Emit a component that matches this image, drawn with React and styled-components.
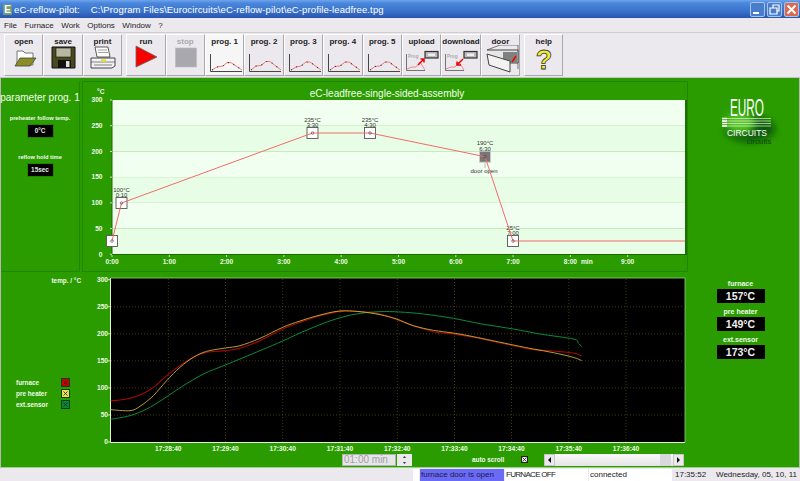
import React from "react";
import styled, { createGlobalStyle } from "styled-components";

const GREEN = "#2a9c00";
const GROOVE = "#1f8600";
const PALE = "#f0faea";

const Global = createGlobalStyle`
  html, body { margin: 0; padding: 0; background: #ece9ee; }
  body { font-family: "Liberation Sans", Arial, sans-serif; }
`;

const Window = styled.div`
  width: 800px;
  height: 481px;
  overflow: hidden;
  display: flex;
  flex-direction: column;
  background: #ece9ee;
`;

const TitleBar = styled.div`
  height: 18px;
  display: flex;
  align-items: center;
  padding: 0 1px 0 3px;
  background: linear-gradient(#6ea4ec 0%, #4a86dc 18%, #3a74cc 60%, #2a54b0 100%);
  color: #fff;
  font-size: 9.5px;
  letter-spacing: 0.12px;
  white-space: pre;
`;

const AppIcon = styled.span`
  width: 9px;
  height: 11px;
  margin-right: 2px;
  background: #6f9a78;
  color: #fff;
  font-size: 10px;
  font-weight: bold;
  line-height: 11px;
  text-align: center;
  letter-spacing: 0;
`;

const WinButtons = styled.div`
  margin-left: auto;
  display: flex;
  gap: 2px;
`;

const WinButton = styled.div`
  width: 15px;
  height: 15px;
  border-radius: 2px;
  border: 1px solid #a8c4ee;
  box-sizing: border-box;
  background: ${p => (p.$close ? "#dc6a50" : "#4a7ccc")};
  svg { display: block; }
`;

const MenuBar = styled.div`
  height: 15px;
  display: flex;
  align-items: center;
  gap: 7.5px;
  padding-left: 4px;
  font-size: 8px;
  color: #222;
  border-bottom: 1px solid #cfcdd0;
  box-sizing: border-box;
`;

const Toolbar = styled.div`
  height: 45px;
  display: flex;
  padding: 1px 0 0 4px;
  box-sizing: border-box;
  border-bottom: 1px solid #c4c4c4;
  align-items: flex-start;
`;

const ToolGroup = styled.div`
  display: flex;
  margin-right: ${p => p.$gap || 0}px;
`;

const ToolButton = styled.div`
  width: 39.4px;
  height: 42px;
  box-sizing: border-box;
  border: 1px solid;
  border-color: #fff #a9a9ad #a9a9ad #fff;
  background: ${p => (p.$on ? "#f6f6f6" : "#ece9ee")};
  text-align: center;
  font-size: 8px;
  font-weight: bold;
  color: ${p => (p.$off ? "#a8a8ae" : "#222")};
  padding-top: 2px;
  svg { display: block; margin: -1px auto 0; }
`;

const Main = styled.div`
  flex: 1;
  display: flex;
  flex-direction: column;
  background: ${GREEN};
  border-left: 1px solid #b8b8b8;
  border-right: 1px solid #b8b8b8;
  border-bottom: 1px solid #9fd090;
  min-height: 0;
`;

const TopRow = styled.div`
  height: 191px;
  margin-top: 3px;
  display: flex;
`;

const ParamPanel = styled.div`
  width: 79px;
  box-sizing: border-box;
  border-right: 1px solid ${GROOVE};
  border-bottom: 1px solid ${GROOVE};
  margin-right: 2px;
  display: flex;
  flex-direction: column;
  align-items: center;
`;

const ParamTitle = styled.div`
  margin-top: 11px;
  font-size: 10px;
  color: #f4fff0;
  white-space: nowrap;
`;

const SmallLabel = styled.div`
  font-size: 6.4px;
  font-weight: bold;
  color: ${PALE};
  white-space: nowrap;
`;

const ParamLabel = styled(SmallLabel)`
  font-size: 5.7px;
  margin-top: ${p => p.$top}px;
`;

const ParamValue = styled.div`
  width: 25px;
  height: 12px;
  margin-top: 3px;
  background: #000;
  color: #e8e8e8;
  border: 1px solid ${GROOVE};
  font-size: 6.4px;
  font-weight: bold;
  line-height: 12px;
  text-align: center;
`;

const ChartFrame = styled.div`
  width: 606px;
  box-sizing: border-box;
  border: 1px solid ${GROOVE};
  svg { display: block; }
`;

const LogoPanel = styled.div`
  flex: 1;
  display: flex;
  justify-content: center;
  align-items: flex-start;
  padding-top: 12px;
`;

const BottomRow = styled.div`
  flex: 1;
  display: flex;
  min-height: 0;
`;

const LegendPanel = styled.div`
  width: 89px;
  display: flex;
  flex-direction: column;
  padding-top: 5px;
  box-sizing: border-box;
`;

const TempHead = styled(SmallLabel)`
  text-align: right;
  padding-right: 9px;
  margin-bottom: 93px;
`;

const LegendRow = styled.div`
  height: 11px;
  display: flex;
  align-items: center;
  padding-left: 15px;
`;

const LegendName = styled(SmallLabel)`
  width: 46px;
`;

const ChartColumn = styled.div`
  width: 597px;
  display: flex;
  flex-direction: column;
  svg { display: block; }
`;

const ControlRow = styled.div`
  height: 13px;
  display: flex;
  align-items: center;
  padding-left: 252px;
`;

const TimeInput = styled.div`
  width: 54px;
  height: 12px;
  box-sizing: border-box;
  background: #e6e6e8;
  border: 1px solid #b4b4b4;
  color: #a0a0a4;
  font-size: 10px;
  line-height: 10px;
  padding-left: 1px;
  white-space: nowrap;
`;

const Spinner = styled.div`
  width: 15px;
  height: 12px;
  margin-left: 1px;
  background: #ece9ee;
  display: flex;
  flex-direction: column;
  justify-content: space-between;
  svg { display: block; }
`;

const AutoLabel = styled(SmallLabel)`
  margin-left: 60px;
  width: 49px;
`;

const CheckBox = styled.div`
  width: 7px;
  height: 7px;
  background: #e8e8e8;
  border: 1px solid #222;
  box-sizing: border-box;
  margin-right: 16px;
  svg { display: block; }
`;

const ScrollBar = styled.div`
  width: 140px;
  height: 12px;
  display: flex;
  background: linear-gradient(#fbfbfb, #e4e4e4);
`;

const ScrollBtn = styled.div`
  width: 11px;
  background: #ece9ee;
  border: 1px solid #c8c8c8;
  box-sizing: border-box;
  svg { display: block; }
`;

const ScrollTrack = styled.div`
  flex: 1;
  margin-left: 2px;
`;

const ScrollThumb = styled.div`
  width: 11px;
  margin-right: 2px;
  background: #d8d8dc;
`;

const ReadoutPanel = styled.div`
  flex: 1;
  display: flex;
  flex-direction: column;
  align-items: center;
  padding: 7px 5px 0 0;
`;

const ReadoutName = styled.div`
  font-size: 7px;
  font-weight: bold;
  color: ${PALE};
  height: 9px;
  line-height: 9px;
  margin-bottom: 1px;
`;

const ReadoutValue = styled.div`
  width: 48px;
  height: 14px;
  margin-bottom: 4px;
  background: #000;
  color: #f0f0f0;
  font-size: 10.5px;
  font-weight: bold;
  line-height: 14px;
  text-align: center;
`;

const StatusBar = styled.div`
  height: 13px;
  display: flex;
  justify-content: flex-end;
  gap: 1px;
  padding-top: 1px;
  box-sizing: border-box;
  font-size: 8px;
  line-height: 12px;
`;

const StatusCell = styled.div`
  width: ${p => p.$w}px;
  box-sizing: border-box;
  padding-left: 1px;
  white-space: nowrap;
  overflow: hidden;
  background: ${p => p.$bg || "#fff"};
  color: ${p => p.$fg || "#222"};
  margin-right: ${p => p.$gap || 0}px;
  letter-spacing: ${p => p.$track || 0}px;
`;

// page coordinates from the two zoomed crops
const fromLeft = pts => pts.map(([x, y]) => [x / 3, 270 + y / 3]);
const fromRight = pts => pts.map(([x, y]) => [300 + x / 3, 270 + y / 3]);

const furnace = [
  ...fromLeft([[332, 396], [380, 390], [420, 378], [460, 355], [500, 320], [540, 290], [580, 265], [620, 250], [676, 245], [720, 238], [780, 215], [848, 180]]),
  ...fromRight([[0, 160], [60, 140], [120, 127], [180, 128], [240, 135], [290, 152], [340, 170], [400, 188], [460, 195], [520, 205], [640, 230], [700, 242], [760, 246], [820, 252], [845, 260]]),
];
const preheater = [
  ...fromLeft([[332, 422], [390, 425], [420, 412], [460, 380], [500, 335], [540, 295], [580, 265], [620, 247], [676, 237], [720, 230], [780, 208], [848, 175]]),
  ...fromRight([[0, 156], [60, 138], [120, 126], [180, 128], [240, 137], [290, 150], [340, 170], [400, 184], [460, 192], [520, 203], [640, 228], [700, 240], [760, 251], [820, 265], [845, 275]]),
];
const sensor = [
  ...fromLeft([[332, 451], [390, 440], [440, 420], [490, 390], [550, 350], [610, 315], [676, 288], [780, 245], [848, 216]]),
  ...fromRight([[0, 192], [60, 167], [120, 146], [180, 133], [240, 128], [300, 129], [370, 135], [460, 148], [540, 164], [640, 180], [720, 195], [820, 210], [835, 222], [845, 233]]),
];

function smooth(pts) {
  let d = `M${pts[0][0]} ${pts[0][1]}`;
  for (let i = 0; i < pts.length - 1; i++) {
    const a = pts[i - 1] || pts[i];
    const b = pts[i];
    const c = pts[i + 1];
    const e = pts[i + 2] || c;
    d += `C${b[0] + (c[0] - a[0]) / 6} ${b[1] + (c[1] - a[1]) / 6} ${c[0] - (e[0] - b[0]) / 6} ${c[1] - (e[1] - b[1]) / 6} ${c[0]} ${c[1]}`;
  }
  return d;
}

const axisText = { fontSize: 6.6, fontWeight: "bold", fill: PALE, fontFamily: "Liberation Sans, sans-serif" };
const pointText = { fontSize: 6, fill: "#333", textAnchor: "middle", fontFamily: "Liberation Sans, sans-serif" };

function Marker({ x, y, top, time, temp, door }) {
  return (
    <g>
      <rect x={x - 5.5} y={y - 5.5} width="11" height="11" fill={door ? "#777" : "#fff"} stroke={door ? "#ccc" : "#555"} strokeWidth="0.9" />
      {temp && <text x={x} y={top} style={pointText}>{temp}</text>}
      {time && <text x={x} y={top + 5.6} style={pointText}>{time}</text>}
    </g>
  );
}

function ProfileChart() {
  const yOf = t => 254.3 - t * 0.5143;
  const xOf = m => 112 + m * 57.3;
  const line = [[112, 241], [121.5, 203], [312.5, 133], [370, 133], [485, 156.7], [513, 241], [685, 241]];
  return (
    <svg width="604" height="189" viewBox="83 82 604 189">
      <text x="387" y="96.5" textAnchor="middle" fill="#f4fff0" fontSize="10" fontFamily="Liberation Sans, sans-serif">eC-leadfree-single-sided-assembly</text>
      <text x="97" y="94" style={axisText}>°C</text>
      {[0, 1, 2, 3, 4, 5].map(i => (
        <rect key={i} x="112" y={100 + i * 25.7} width="573" height="25.8" fill={i % 2 ? "#e8fde6" : "#f1fff0"} />
      ))}
      <rect x="685" y="100" width="2" height="155" fill="#1a7000" />
      <path d="M112 100V254.5H685" fill="none" stroke="#1a6a00" strokeWidth="1" />
      {[0, 50, 100, 150, 200, 250, 300].map(t => (
        <g key={t}>
          <path d={`M110 ${yOf(t)}H112`} stroke={PALE} strokeWidth="0.8" />
          <text x="102.5" y={yOf(t) + 2.2} textAnchor="end" style={axisText}>{t}</text>
        </g>
      ))}
      {["0:00", "1:00", "2:00", "3:00", "4:00", "5:00", "6:00", "7:00", "8:00", "9:00"].map((l, i) => (
        <g key={l}>
          <path d={`M${xOf(i)} 255V257`} stroke={PALE} strokeWidth="0.8" />
          <text x={xOf(i)} y="264" textAnchor="middle" style={axisText}>{l}</text>
        </g>
      ))}
      <text x="581" y="264" style={axisText}>min</text>
      <Marker x={112} y={241} />
      <Marker x={121.5} y={203} temp="100°C" time="0:10" top={191.5} />
      <Marker x={312.5} y={133} temp="235°C" time="3:30" top={121.5} />
      <Marker x={370} y={133} temp="235°C" time="4:30" top={121.5} />
      <Marker x={485} y={156.7} temp="190°C" time="6:30" top={145} door />
      <Marker x={513} y={241} temp="25°C" time="7:00" top={229.5} />
      <path d="M485 163V168" stroke="#bbb" strokeWidth="1" />
      <text x="484" y="173" style={pointText}>door open</text>
      <polyline points={line.map(p => p.join(",")).join(" ")} fill="none" stroke="#f46a6a" strokeWidth="1" />
      {line.slice(0, 6).map(p => (
        <circle key={p[0]} cx={p[0]} cy={p[1]} r="1.3" fill="none" stroke="#444" strokeWidth="0.6" />
      ))}
    </svg>
  );
}

function LiveChart() {
  const gridX = [168.3, 225.5, 282.7, 340, 397.3, 454.5, 511.5, 568.8, 626];
  const gridT = [0, 50, 100, 150, 200, 250, 300];
  const labels = ["17:28:40", "17:29:40", "17:30:40", "17:31:40", "17:32:40", "17:33:40", "17:34:40", "17:35:40", "17:36:40"];
  const yOf = t => 443 - t * 0.541;
  return (
    <svg width="597" height="181" viewBox="90 273 597 181">
      <rect x="110.5" y="279" width="574.5" height="164.5" fill="#000" />
      <path d="M110.5 279H685V443.5H110.5Z" fill="none" stroke="#8fcf80" strokeWidth="0.8" />
      <path d="M110.5 279V443.5H685" fill="none" stroke="#e4f4dc" strokeWidth="1" />
      {gridX.map(x => <path key={x} d={`M${x} 280V443`} stroke="#4a4a10" strokeWidth="0.8" strokeDasharray="1 2" />)}
      {gridT.slice(1, 6).map(t => <path key={t} d={`M111 ${yOf(t)}H685`} stroke="#4a4a10" strokeWidth="0.8" strokeDasharray="1 2" />)}
      {gridT.map(t => (
        <g key={t}>
          <path d={`M108 ${yOf(t)}H110.5`} stroke={PALE} strokeWidth="0.8" />
          <text x="108" y={yOf(t) + 2.2} textAnchor="end" style={axisText}>{t}</text>
        </g>
      ))}
      {labels.map((l, i) => <text key={l} x={gridX[i]} y="451.5" textAnchor="middle" style={axisText}>{l}</text>)}
      <path d={smooth(furnace)} fill="none" stroke="#a80808" strokeWidth="1.1" />
      <path d={smooth(sensor)} fill="none" stroke="#0c8a3c" strokeWidth="1" />
      <path d={smooth(preheater)} fill="none" stroke="#c8b038" strokeWidth="0.9" />
    </svg>
  );
}

function Logo() {
  return (
    <svg width="110" height="60" viewBox="-17 0 110 60">
      <defs>
        <filter id="soft" x="-30%" y="-30%" width="160%" height="160%"><feGaussianBlur stdDeviation="3.5" /></filter>
        <filter id="softer" x="-30%" y="-30%" width="160%" height="160%"><feGaussianBlur stdDeviation="0.7" /></filter>
      </defs>
      <ellipse cx="44" cy="36" rx="25" ry="13" fill="#0f5a10" filter="url(#soft)" />
      <ellipse cx="34" cy="30" rx="15" ry="10" fill="#58c828" filter="url(#soft)" />
      <text x="53" y="51" fontSize="8" fill="#0d4a10" textAnchor="middle" filter="url(#softer)" fontFamily="Liberation Sans, sans-serif">circuits</text>
      <text x="24" y="23" fontSize="23" fill="#fff" textLength="34" lengthAdjust="spacingAndGlyphs" fontFamily="Liberation Sans, sans-serif">EURO</text>
      <path d="M16 25.5H65M16 28H65M16 30.5H65M16 33H65" stroke="#dff2d4" strokeWidth="0.7" />
      <path d="M16 25.5H21M16 28H21M16 30.5H21M16 33H21" stroke="#fff" strokeWidth="1.4" />
      <text x="21" y="43" fontSize="9.5" fill="#fff" textLength="40" lengthAdjust="spacingAndGlyphs" fontFamily="Liberation Sans, sans-serif">CIRCUITS</text>
    </svg>
  );
}

function Cross({ c = "#222" }) {
  return (
    <svg width="5" height="5" viewBox="0 0 5 5">
      <path d="M0.5 0.5L4.5 4.5M4.5 0.5L0.5 4.5" stroke={c} strokeWidth="0.8" />
    </svg>
  );
}

const SwatchBox = styled.div`
  width: 7px;
  height: 7px;
  background: ${p => p.$c};
  outline: 1px solid #143c08;
  display: flex;
  align-items: center;
  justify-content: center;
`;

// toolbar drawings, all on a 38 x 30 canvas below the label
const Icon = ({ children }) => <svg width="38" height="30" viewBox="0 0 38 30">{children}</svg>;

const OpenIcon = () => (
  <Icon>
    <path d="M12 20V6H18L20 8H28V20Z" fill="#fff" stroke="#555" strokeWidth="0.8" />
    <path d="M10 21L15 13H31L25 21Z" fill="#8c8c24" stroke="#444" strokeWidth="0.8" />
  </Icon>
);

const SaveIcon = () => (
  <Icon>
    <path d="M8 2H31V23H8Z" fill="#4a4a20" stroke="#111" />
    <rect x="12" y="3" width="15" height="9" fill="#b8b8a0" stroke="#111" strokeWidth="0.6" />
    <rect x="14" y="15" width="13" height="8" fill="#111" />
    <rect x="22" y="16" width="3.5" height="6" fill="#ddd" />
  </Icon>
);

const PrintIcon = () => (
  <Icon>
    <path d="M11 2H24L26 12H13Z" fill="#fff" stroke="#333" strokeWidth="0.8" />
    <path d="M14 5H23M14 7.5H24" stroke="#777" strokeWidth="0.7" />
    <path d="M7 13H31V21L28 23H7Z" fill="#f2f2f2" stroke="#333" strokeWidth="0.9" />
    <path d="M7 17H31M10 20H28" stroke="#555" strokeWidth="0.7" />
    <rect x="17" y="14.5" width="5" height="2.5" fill="#e4d840" />
  </Icon>
);

const RunIcon = () => (
  <Icon>
    <path d="M9 1L30 12L9 22Z" fill="#f80000" stroke="#666" strokeWidth="0.8" />
  </Icon>
);

const StopIcon = () => (
  <Icon>
    <rect x="8.5" y="3" width="21" height="19" fill="#a8a8ae" stroke="#bbb" strokeWidth="0.6" />
  </Icon>
);

const Axes = () => <path d="M4.5 9V26.5H36" fill="none" stroke="#333" strokeWidth="0.9" />;

const ProgIcon = ({ pts }) => (
  <Icon>
    <Axes />
    <polyline points={pts} fill="none" stroke="#ee7070" strokeWidth="0.9" />
    <polyline points={pts} fill="none" stroke="#333" strokeWidth="1.1" strokeDasharray="1 5" />
  </Icon>
);

const TransferIcon = ({ down }) => (
  <Icon>
    <path d="M3.5 9V25.5H22" fill="none" stroke="#555" strokeWidth="0.8" />
    <text x="5" y="13" fontSize="4.6" fill="#aaa" fontFamily="Liberation Sans, sans-serif">Prog</text>
    <polyline points="4,24 9,22 13,22 17,17 22,25" fill="none" stroke="#ee7070" strokeWidth="0.8" />
    <rect x="22" y="6.5" width="13" height="6.5" fill="#bbb" stroke="#333" strokeWidth="1.2" />
    <rect x="25" y="8.5" width="7" height="2.5" fill="#eee" />
    {down
      ? <path d="M21 14L15 20M15 16.5V20H19" fill="none" stroke="#f00000" strokeWidth="1.5" />
      : <path d="M15 20L21 14M17.5 14H21V17.5" fill="none" stroke="#f00000" strokeWidth="1.5" />}
  </Icon>
);

const DoorIcon = () => (
  <Icon>
    <path d="M5 5L18 0H36V24" fill="none" stroke="#555" strokeWidth="0.8" />
    <path d="M5 5H36V18H28" fill="#e6e6e8" stroke="#444" strokeWidth="1" />
    <rect x="21" y="7" width="14" height="11" fill="#808080" />
    <path d="M5 9L28 16V27L7 20Z" fill="#f2f2f2" stroke="#444" strokeWidth="1" />
    <path d="M34 11L30 17" stroke="#f00000" strokeWidth="1.4" />
  </Icon>
);

const HelpIcon = () => (
  <Icon>
    <text x="19" y="24" textAnchor="middle" fontSize="27" fontWeight="bold" fill="#f6ee30" stroke="#333" strokeWidth="0.8" fontFamily="Liberation Sans, sans-serif">?</text>
  </Icon>
);

const progs = [
  ["prog. 1", "6,25 11,22 17,21 21,17.6 25,17.6 36,25"],
  ["prog. 2", "6,25 11,21 16,20.5 21,16.5 25,16.5 36,25"],
  ["prog. 3", "6,25 11,22 16,21 21,17 25,17 36,25"],
  ["prog. 4", "6,25 11,21.5 16,21 21,17 25,17 36,25"],
  ["prog. 5", "6,25 11,21.5 16,21 21,17 25,17 36,25"],
];

export default function App() {
  return (
    <Window>
      <Global />
      <TitleBar>
        <AppIcon>E</AppIcon>
        {"eC-reflow-pilot:    C:\\Program Files\\Eurocircuits\\eC-reflow-pilot\\eC-profile-leadfree.tpg"}
        <WinButtons>
          <WinButton>
            <svg width="13" height="13" viewBox="0 0 13 13"><path d="M2 10H8" stroke="#fff" strokeWidth="2" /></svg>
          </WinButton>
          <WinButton>
            <svg width="13" height="13" viewBox="0 0 13 13"><path d="M2 5H9V11H2ZM5 5V2H11V8H9" fill="none" stroke="#fff" strokeWidth="1.2" /></svg>
          </WinButton>
          <WinButton $close>
            <svg width="13" height="13" viewBox="0 0 13 13"><path d="M2.5 2.5L10.5 10.5M10.5 2.5L2.5 10.5" stroke="#fff" strokeWidth="2" /></svg>
          </WinButton>
        </WinButtons>
      </TitleBar>

      <MenuBar>
        <span>File</span>
        <span>Furnace</span>
        <span>Work</span>
        <span>Options</span>
        <span>Window</span>
        <span>?</span>
      </MenuBar>

      <Toolbar>
        <ToolGroup $gap={4}>
          <ToolButton>open<OpenIcon /></ToolButton>
          <ToolButton>save<SaveIcon /></ToolButton>
          <ToolButton>print<PrintIcon /></ToolButton>
        </ToolGroup>
        <ToolGroup $gap={4}>
          <ToolButton>run<RunIcon /></ToolButton>
          <ToolButton $off>stop<StopIcon /></ToolButton>
          {progs.map(([name, pts], i) => (
            <ToolButton key={name} $on={i === 0}>{name}<ProgIcon pts={pts} /></ToolButton>
          ))}
          <ToolButton>upload<TransferIcon /></ToolButton>
          <ToolButton>download<TransferIcon down /></ToolButton>
          <ToolButton>door<DoorIcon /></ToolButton>
        </ToolGroup>
        <ToolGroup>
          <ToolButton>help<HelpIcon /></ToolButton>
        </ToolGroup>
      </Toolbar>

      <Main>
        <TopRow>
          <ParamPanel>
            <ParamTitle>parameter prog. 1</ParamTitle>
            <ParamLabel $top={12}>preheater follow temp.</ParamLabel>
            <ParamValue>0°C</ParamValue>
            <ParamLabel $top={16}>reflow hold time</ParamLabel>
            <ParamValue>15sec</ParamValue>
          </ParamPanel>
          <ChartFrame>
            <ProfileChart />
          </ChartFrame>
          <LogoPanel>
            <Logo />
          </LogoPanel>
        </TopRow>

        <BottomRow>
          <LegendPanel>
            <TempHead>temp. / °C</TempHead>
            <LegendRow><LegendName>furnace</LegendName><SwatchBox $c="#c80000"><Cross /></SwatchBox></LegendRow>
            <LegendRow><LegendName>pre heater</LegendName><SwatchBox $c="#e8e050"><Cross /></SwatchBox></LegendRow>
            <LegendRow><LegendName>ext.sensor</LegendName><SwatchBox $c="#008a40"><Cross /></SwatchBox></LegendRow>
          </LegendPanel>
          <ChartColumn>
            <LiveChart />
            <ControlRow>
              <TimeInput>01:00 min</TimeInput>
              <Spinner>
                <svg width="15" height="5" viewBox="0 0 15 5"><path d="M6 4H9L7.5 2Z" fill="#333" /></svg>
                <svg width="15" height="5" viewBox="0 0 15 5"><path d="M6 1H9L7.5 3Z" fill="#333" /></svg>
              </Spinner>
              <AutoLabel>auto scroll</AutoLabel>
              <CheckBox><Cross /></CheckBox>
              <ScrollBar>
                <ScrollBtn><svg width="9" height="10" viewBox="0 0 9 10"><path d="M6 2V8L3 5Z" fill="#111" /></svg></ScrollBtn>
                <ScrollTrack />
                <ScrollThumb />
                <ScrollBtn><svg width="9" height="10" viewBox="0 0 9 10"><path d="M3 2V8L6 5Z" fill="#111" /></svg></ScrollBtn>
              </ScrollBar>
            </ControlRow>
          </ChartColumn>
          <ReadoutPanel>
            <ReadoutName>furnace</ReadoutName>
            <ReadoutValue>157°C</ReadoutValue>
            <ReadoutName>pre heater</ReadoutName>
            <ReadoutValue>149°C</ReadoutValue>
            <ReadoutName>ext.sensor</ReadoutName>
            <ReadoutValue>173°C</ReadoutValue>
          </ReadoutPanel>
        </BottomRow>
      </Main>

      <StatusBar>
        <StatusCell $w={6} />
        <StatusCell $w={84} $bg="#6a6af4" $fg="#1a1a50">furnace door is open</StatusCell>
        <StatusCell $w={83} $track={-0.7}>FURNACE OFF</StatusCell>
        <StatusCell $w={83} $gap={1}>connected</StatusCell>
        <StatusCell $w={39} $bg="#ece9ee" $gap={1}>17:35:52</StatusCell>
        <StatusCell $w={85} $bg="#ece9ee">Wednesday, 05, 10, 11</StatusCell>
      </StatusBar>
    </Window>
  );
}
